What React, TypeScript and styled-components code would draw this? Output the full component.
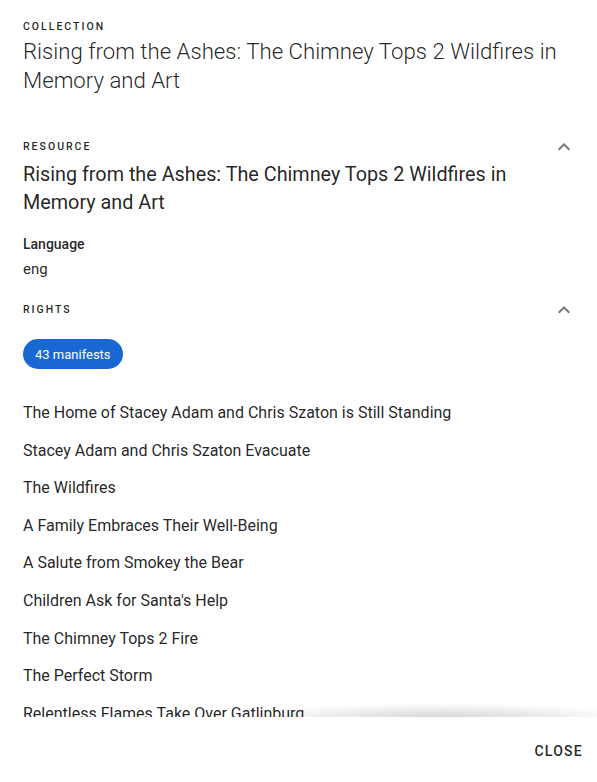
import React from 'react';
import styled, { createGlobalStyle } from 'styled-components';

const GlobalStyle = createGlobalStyle`
  html, body {
    margin: 0;
    padding: 0;
    background: #fff;
    font-family: Roboto, "Liberation Sans", Arial, sans-serif;
    color: rgba(0, 0, 0, 0.87);
  }
`;

const Dialog = styled.div`
  width: 597px;
  height: 782px;
  display: flex;
  flex-direction: column;
  background: #fff;
  overflow: hidden;
`;

const Content = styled.div`
  position: relative;
  flex: 1;
  overflow: hidden;
  padding: 0 24px 0 23px;

  &::after {
    content: '';
    position: absolute;
    left: 280px;
    right: -40px;
    bottom: 0;
    height: 14px;
    background: radial-gradient(ellipse at 45% 100%, rgba(0, 0, 0, 0.16), rgba(0, 0, 0, 0) 70%);
    pointer-events: none;
  }
`;

const Section = styled.section<{ $top?: number }>`
  padding-top: ${p => p.$top ?? 0}px;
`;

const HeaderRow = styled.div`
  display: flex;
  align-items: center;
  justify-content: space-between;
`;

const Overline = styled.div`
  font-size: 10.5px;
  font-weight: 500;
  letter-spacing: 2px;
  text-transform: uppercase;
  line-height: 16px;
  color: rgba(0, 0, 0, 0.87);
`;

const Toggle = styled.button`
  border: 0;
  background: none;
  padding: 0;
  width: 24px;
  height: 24px;
  display: flex;
  align-items: center;
  justify-content: center;
  margin-right: -3px;
  color: rgba(0, 0, 0, 0.54);
`;

const CollectionTitle = styled.h2`
  margin: 2px 0 0;
  font-size: 22.2px;
  font-weight: 300;
  line-height: 29px;
`;

const ResourceTitle = styled.h3`
  margin: 2px 0 0;
  font-size: 19.8px;
  font-weight: 400;
  line-height: 28px;
`;

const Label = styled.div`
  margin-top: 17px;
  font-size: 14px;
  font-weight: 500;
  line-height: 20px;
`;

const Value = styled.div`
  margin-top: 5px;
  font-size: 15px;
  line-height: 20px;
`;

const Chip = styled.span`
  display: inline-flex;
  align-items: center;
  height: 30px;
  padding: 0 12px;
  border-radius: 15px;
  background: #1967d2;
  color: #fff;
  font-size: 13px;
  margin-top: 17px;
`;

const List = styled.ul`
  list-style: none;
  margin: 25px 0 0;
  padding: 0;
  display: flex;
  flex-direction: column;
`;

const Item = styled.li`
  font-size: 16px;
  line-height: 24px;
  padding: 7px 0 6.6px;
`;

const Actions = styled.div`
  height: 65px;
  display: flex;
  align-items: center;
  justify-content: flex-end;
  padding: 0 6px;
`;

const TextButton = styled.button`
  border: 0;
  background: none;
  font-family: inherit;
  font-size: 14px;
  font-weight: 500;
  letter-spacing: 1.25px;
  text-transform: uppercase;
  color: rgba(0, 0, 0, 0.87);
  padding: 6px 8px;
  margin-top: 2px;
`;

const Chevron = () => (
  <svg width="24" height="24" viewBox="0 0 24 24" fill="currentColor">
    <path d="M7.41 15.41 12 10.83l4.59 4.58L18 14l-6-6-6 6z" />
  </svg>
);

const manifests = [
  'The Home of Stacey Adam and Chris Szaton is Still Standing',
  'Stacey Adam and Chris Szaton Evacuate',
  'The Wildfires',
  'A Family Embraces Their Well-Being',
  'A Salute from Smokey the Bear',
  "Children Ask for Santa's Help",
  'The Chimney Tops 2 Fire',
  'The Perfect Storm',
  'Relentless Flames Take Over Gatlinburg',
  'Community Strength',
];

const App: React.FC = () => (
  <>
    <GlobalStyle />
    <Dialog>
      <Content>
        <Section $top={19}>
          <Overline>Collection</Overline>
          <CollectionTitle>
            Rising from the Ashes: The Chimney Tops 2 Wildfires in Memory and Art
          </CollectionTitle>
        </Section>
        <Section $top={40}>
          <HeaderRow>
            <Overline>Resource</Overline>
            <Toggle aria-label="collapse"><Chevron /></Toggle>
          </HeaderRow>
          <ResourceTitle>
            Rising from the Ashes: The Chimney Tops 2 Wildfires in Memory and Art
          </ResourceTitle>
          <Label>Language</Label>
          <Value>eng</Value>
        </Section>
        <Section $top={19}>
          <HeaderRow>
            <Overline>Rights</Overline>
            <Toggle aria-label="collapse"><Chevron /></Toggle>
          </HeaderRow>
          <Chip>43 manifests</Chip>
          <List>
            {manifests.map(m => (
              <Item key={m}>{m}</Item>
            ))}
          </List>
        </Section>
      </Content>
      <Actions>
        <TextButton>Close</TextButton>
      </Actions>
    </Dialog>
  </>
);

export default App;
